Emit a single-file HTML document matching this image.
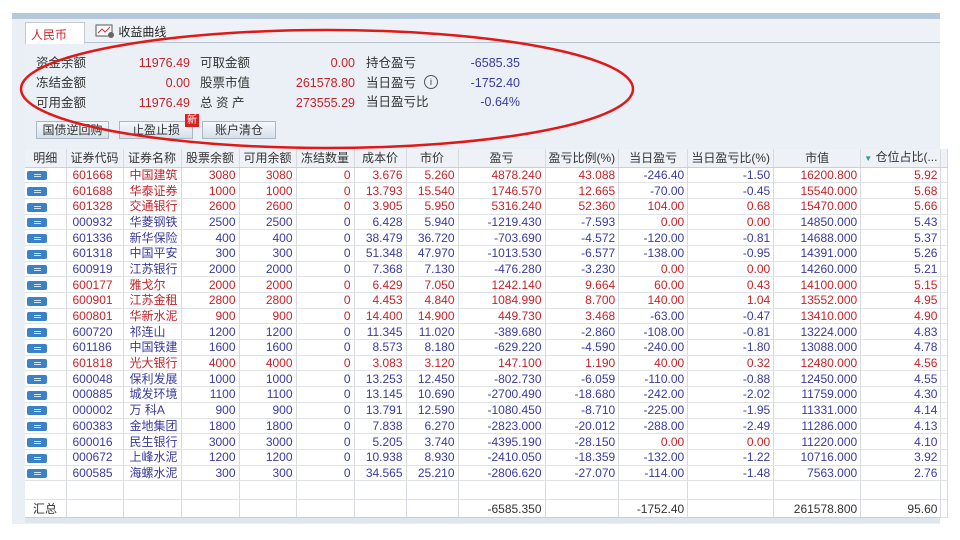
<!DOCTYPE html>
<html><head><meta charset="utf-8"><style>
*{margin:0;padding:0;box-sizing:border-box}
body{width:960px;height:540px;background:#fff;position:relative;overflow:hidden;font-family:"Liberation Sans","Noto Sans CJK SC",sans-serif;font-size:11.5px;color:#333}
.panel{position:absolute;left:12px;top:13px;width:928px;height:511px;background:#e9eff5;border-top:6px solid #b5c8dc}
.tabbar{position:absolute;left:25px;top:19px;width:915px;height:24px;background:#eef2f6;border-bottom:1px solid #b9c4cf}
.tab1{position:absolute;left:25px;top:22px;width:60px;height:22px;background:#fff;border:1px solid #c3ccd6;border-bottom:none;color:#d0262b;font-size:12px;padding:3px 5px}
.tab2{position:absolute;left:95px;top:23px;font-size:12px;color:#222}
.sum{position:absolute;left:25px;top:44px;width:915px;height:104px;background:#eaf0f5}
.s{position:absolute;font-size:12.5px;white-space:nowrap;line-height:16px}
.v{text-align:right;width:100px}
.rd{color:#c4232a}.bl{color:#3a3aa0}
.btn{position:absolute;top:121px;height:18px;background:linear-gradient(#f5f8fb,#d6e0ea);border:1px solid #aab7c4;font-size:12px;text-align:center;line-height:16px}
table{position:absolute;left:25px;top:149px;border-collapse:collapse;background:#fff;table-layout:fixed}
td,th{border-right:1px solid #d7dbe0;border-bottom:1px solid #e0e3e6;height:15.7px;padding:0 3px;text-align:right;white-space:nowrap;overflow:hidden;font-weight:normal;font-size:12px;line-height:14px}
th{background:#eef2f6;text-align:center;height:18px;color:#333;border-bottom:1px solid #c9d0d8}
td:nth-child(1){text-align:left;padding-left:2px}
td:nth-child(2),td:nth-child(3){text-align:left;padding-left:6px}
tr.p td{color:#c4232a}tr.n td{color:#3a3aa0}
td.R{color:#c4232a!important}td.B{color:#3a3aa0!important}
.ic{display:inline-block;width:20px;height:9px;background:#3a82c8;border-radius:2px;vertical-align:middle;position:relative}
.ic:after{content:"";position:absolute;left:7px;top:3px;width:7px;height:1px;background:#cfe3f6;box-shadow:0 2px 0 #cfe3f6}
tr.tot td{color:#333;height:18px}
</style></head><body>
<div class="panel"></div>
<div class="tabbar"></div>
<div class="tab1">人民币</div>
<div class="tab2"><svg width="20" height="14" style="vertical-align:-2px"><rect x="1" y="1" width="16" height="11" fill="#fff" stroke="#555"/><path d="M3 9 L7 5 L10 8 L15 3" stroke="#c33" fill="none"/><circle cx="16" cy="11" r="3" fill="#666"/></svg> 收益曲线</div>
<div class="sum"></div>
<div class="s" style="left:36px;top:55px">资金余额</div><div class="s v rd" style="left:90px;top:55px">11976.49</div>
<div class="s" style="left:200px;top:55px">可取金额</div><div class="s v rd" style="left:255px;top:55px">0.00</div>
<div class="s" style="left:366px;top:55px">持仓盈亏</div><div class="s v bl" style="left:420px;top:55px">-6585.35</div>
<div class="s" style="left:36px;top:75px">冻结金额</div><div class="s v rd" style="left:90px;top:75px">0.00</div>
<div class="s" style="left:200px;top:75px">股票市值</div><div class="s v rd" style="left:255px;top:75px">261578.80</div>
<div class="s" style="left:366px;top:75px">当日盈亏</div><div class="s" style="left:424px;top:75px;width:14px;height:14px;border:1px solid #555;border-radius:50%;font-size:9px;text-align:center;line-height:12px">i</div><div class="s v bl" style="left:420px;top:75px">-1752.40</div>
<div class="s" style="left:36px;top:95px">可用金额</div><div class="s v rd" style="left:90px;top:95px">11976.49</div>
<div class="s" style="left:200px;top:95px">总 资 产</div><div class="s v rd" style="left:255px;top:95px">273555.29</div>
<div class="s" style="left:366px;top:94px">当日盈亏比</div><div class="s v bl" style="left:420px;top:94px">-0.64%</div>
<div class="btn" style="left:36px;width:73px">国债逆回购</div>
<div class="btn" style="left:119px;width:74px">止盈止损</div>
<div class="s" style="left:185px;top:114px;background:#d72020;color:#fff;font-size:10px;padding:0 2px;line-height:13px">新</div>
<div class="btn" style="left:202px;width:74px">账户清仓</div>
<table>
<colgroup><col style="width:41px"><col style="width:57px"><col style="width:58px"><col style="width:58px"><col style="width:57px"><col style="width:58px"><col style="width:52px"><col style="width:52px"><col style="width:87px"><col style="width:73px"><col style="width:69px"><col style="width:86px"><col style="width:87px"><col style="width:75px"><col style="width:5px"></colgroup>
<tr><th>明细</th><th>证券代码</th><th>证券名称</th><th>股票余额</th><th>可用余额</th><th>冻结数量</th><th>成本价</th><th>市价</th><th>盈亏</th><th>盈亏比例(%)</th><th>当日盈亏</th><th>当日盈亏比(%)</th><th>市值</th><th style="text-align:left"><span style="color:#2a9a9a;font-size:8px">▼</span> 仓位占比(...</th><th></th></tr>
<tr class="p"><td><i class="ic"></i></td><td>601668</td><td>中国建筑</td><td>3080</td><td>3080</td><td>0</td><td>3.676</td><td>5.260</td><td>4878.240</td><td>43.088</td><td class="B">-246.40</td><td class="B">-1.50</td><td>16200.800</td><td>5.92</td><td></td></tr>
<tr class="p"><td><i class="ic"></i></td><td>601688</td><td>华泰证券</td><td>1000</td><td>1000</td><td>0</td><td>13.793</td><td>15.540</td><td>1746.570</td><td>12.665</td><td class="B">-70.00</td><td class="B">-0.45</td><td>15540.000</td><td>5.68</td><td></td></tr>
<tr class="p"><td><i class="ic"></i></td><td>601328</td><td>交通银行</td><td>2600</td><td>2600</td><td>0</td><td>3.905</td><td>5.950</td><td>5316.240</td><td>52.360</td><td class="R">104.00</td><td class="R">0.68</td><td>15470.000</td><td>5.66</td><td></td></tr>
<tr class="n"><td><i class="ic"></i></td><td>000932</td><td>华菱钢铁</td><td>2500</td><td>2500</td><td>0</td><td>6.428</td><td>5.940</td><td>-1219.430</td><td>-7.593</td><td class="R">0.00</td><td class="R">0.00</td><td>14850.000</td><td>5.43</td><td></td></tr>
<tr class="n"><td><i class="ic"></i></td><td>601336</td><td>新华保险</td><td>400</td><td>400</td><td>0</td><td>38.479</td><td>36.720</td><td>-703.690</td><td>-4.572</td><td>-120.00</td><td>-0.81</td><td>14688.000</td><td>5.37</td><td></td></tr>
<tr class="n"><td><i class="ic"></i></td><td>601318</td><td>中国平安</td><td>300</td><td>300</td><td>0</td><td>51.348</td><td>47.970</td><td>-1013.530</td><td>-6.577</td><td>-138.00</td><td>-0.95</td><td>14391.000</td><td>5.26</td><td></td></tr>
<tr class="n"><td><i class="ic"></i></td><td>600919</td><td>江苏银行</td><td>2000</td><td>2000</td><td>0</td><td>7.368</td><td>7.130</td><td>-476.280</td><td>-3.230</td><td class="R">0.00</td><td class="R">0.00</td><td>14260.000</td><td>5.21</td><td></td></tr>
<tr class="p"><td><i class="ic"></i></td><td>600177</td><td>雅戈尔</td><td>2000</td><td>2000</td><td>0</td><td>6.429</td><td>7.050</td><td>1242.140</td><td>9.664</td><td>60.00</td><td>0.43</td><td>14100.000</td><td>5.15</td><td></td></tr>
<tr class="p"><td><i class="ic"></i></td><td>600901</td><td>江苏金租</td><td>2800</td><td>2800</td><td>0</td><td>4.453</td><td>4.840</td><td>1084.990</td><td>8.700</td><td>140.00</td><td>1.04</td><td>13552.000</td><td>4.95</td><td></td></tr>
<tr class="p"><td><i class="ic"></i></td><td>600801</td><td>华新水泥</td><td>900</td><td>900</td><td>0</td><td>14.400</td><td>14.900</td><td>449.730</td><td>3.468</td><td class="B">-63.00</td><td class="B">-0.47</td><td>13410.000</td><td>4.90</td><td></td></tr>
<tr class="n"><td><i class="ic"></i></td><td>600720</td><td>祁连山</td><td>1200</td><td>1200</td><td>0</td><td>11.345</td><td>11.020</td><td>-389.680</td><td>-2.860</td><td>-108.00</td><td>-0.81</td><td>13224.000</td><td>4.83</td><td></td></tr>
<tr class="n"><td><i class="ic"></i></td><td>601186</td><td>中国铁建</td><td>1600</td><td>1600</td><td>0</td><td>8.573</td><td>8.180</td><td>-629.220</td><td>-4.590</td><td>-240.00</td><td>-1.80</td><td>13088.000</td><td>4.78</td><td></td></tr>
<tr class="p"><td><i class="ic"></i></td><td>601818</td><td>光大银行</td><td>4000</td><td>4000</td><td>0</td><td>3.083</td><td>3.120</td><td>147.100</td><td>1.190</td><td>40.00</td><td>0.32</td><td>12480.000</td><td>4.56</td><td></td></tr>
<tr class="n"><td><i class="ic"></i></td><td>600048</td><td>保利发展</td><td>1000</td><td>1000</td><td>0</td><td>13.253</td><td>12.450</td><td>-802.730</td><td>-6.059</td><td>-110.00</td><td>-0.88</td><td>12450.000</td><td>4.55</td><td></td></tr>
<tr class="n"><td><i class="ic"></i></td><td>000885</td><td>城发环境</td><td>1100</td><td>1100</td><td>0</td><td>13.145</td><td>10.690</td><td>-2700.490</td><td>-18.680</td><td>-242.00</td><td>-2.02</td><td>11759.000</td><td>4.30</td><td></td></tr>
<tr class="n"><td><i class="ic"></i></td><td>000002</td><td>万 科A</td><td>900</td><td>900</td><td>0</td><td>13.791</td><td>12.590</td><td>-1080.450</td><td>-8.710</td><td>-225.00</td><td>-1.95</td><td>11331.000</td><td>4.14</td><td></td></tr>
<tr class="n"><td><i class="ic"></i></td><td>600383</td><td>金地集团</td><td>1800</td><td>1800</td><td>0</td><td>7.838</td><td>6.270</td><td>-2823.000</td><td>-20.012</td><td>-288.00</td><td>-2.49</td><td>11286.000</td><td>4.13</td><td></td></tr>
<tr class="n"><td><i class="ic"></i></td><td>600016</td><td>民生银行</td><td>3000</td><td>3000</td><td>0</td><td>5.205</td><td>3.740</td><td>-4395.190</td><td>-28.150</td><td class="R">0.00</td><td class="R">0.00</td><td>11220.000</td><td>4.10</td><td></td></tr>
<tr class="n"><td><i class="ic"></i></td><td>000672</td><td>上峰水泥</td><td>1200</td><td>1200</td><td>0</td><td>10.938</td><td>8.930</td><td>-2410.050</td><td>-18.359</td><td>-132.00</td><td>-1.22</td><td>10716.000</td><td>3.92</td><td></td></tr>
<tr class="n"><td><i class="ic"></i></td><td>600585</td><td>海螺水泥</td><td>300</td><td>300</td><td>0</td><td>34.565</td><td>25.210</td><td>-2806.620</td><td>-27.070</td><td>-114.00</td><td>-1.48</td><td>7563.000</td><td>2.76</td><td></td></tr>
<tr><td style="height:19px"></td><td></td><td></td><td></td><td></td><td></td><td></td><td></td><td></td><td></td><td></td><td></td><td></td><td></td><td></td></tr>
<tr class="tot"><td style="padding-left:8px">汇总</td><td></td><td></td><td></td><td></td><td></td><td></td><td></td><td>-6585.350</td><td></td><td>-1752.40</td><td></td><td>261578.800</td><td>95.60</td><td></td></tr>
</table>
<div style="position:absolute;left:25px;top:517px;width:915px;height:6px;background:#dfe6ee;border-top:1px solid #c5d0dc"></div>
<svg style="position:absolute;left:0;top:0" width="960" height="540"><ellipse cx="327" cy="89" rx="306" ry="59" fill="none" stroke="#e01818" stroke-width="2.5"/></svg>
</body></html>
